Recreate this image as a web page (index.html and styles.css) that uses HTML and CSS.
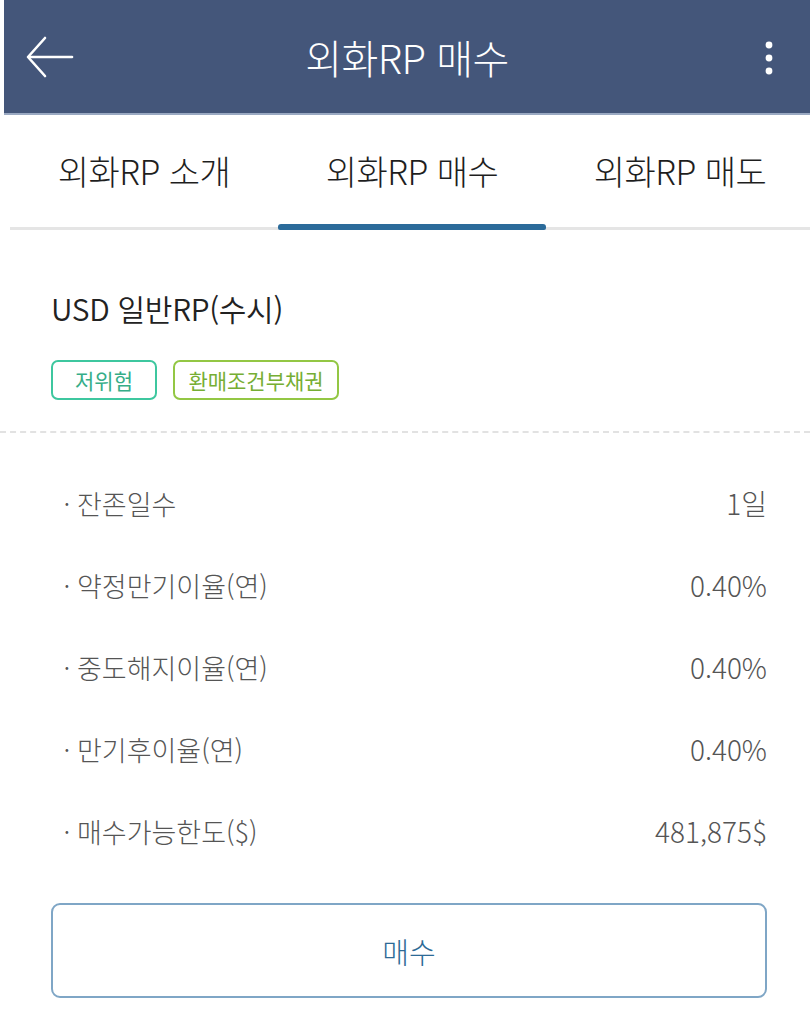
FILE: index.html
```html
<!DOCTYPE html>
<html lang="ko">
<head>
<meta charset="utf-8">
<title>외화RP 매수</title>
<link rel="stylesheet" href="styles.css">
</head>
<body>
<div class="app">
  <header class="topbar">
    <div class="topbar-left">
      <svg class="icon-back" width="48" height="44" viewBox="0 0 48 44" fill="none" stroke="#fff" stroke-width="2.6" stroke-linecap="round" stroke-linejoin="round">
        <path d="M46 21H3"/>
        <path d="M19 2L2 21L19 40"/>
      </svg>
    </div>
    <h1 class="topbar-title">외화RP 매수</h1>
    <div class="topbar-right">
      <svg class="icon-more" width="10" height="36" viewBox="0 0 10 36" fill="#fff">
        <circle cx="5" cy="5" r="3.4"/>
        <circle cx="5" cy="18" r="3.4"/>
        <circle cx="5" cy="31" r="3.4"/>
      </svg>
    </div>
  </header>

  <nav class="tabs">
    <div class="tab">외화RP 소개</div>
    <div class="tab active">외화RP 매수</div>
    <div class="tab">외화RP 매도</div>
  </nav>

  <section class="product">
    <h2 class="product-name">USD 일반RP(수시)</h2>
    <div class="badges">
      <span class="badge badge-risk">저위험</span>
      <span class="badge badge-type">환매조건부채권</span>
    </div>
  </section>

  <div class="divider"></div>

  <ul class="info">
    <li class="info-row"><span class="label"><span class="dot">·</span>잔존일수</span><span class="value">1일</span></li>
    <li class="info-row"><span class="label"><span class="dot">·</span>약정만기이율(연)</span><span class="value">0.40%</span></li>
    <li class="info-row"><span class="label"><span class="dot">·</span>중도해지이율(연)</span><span class="value">0.40%</span></li>
    <li class="info-row"><span class="label"><span class="dot">·</span>만기후이율(연)</span><span class="value">0.40%</span></li>
    <li class="info-row"><span class="label"><span class="dot">·</span>매수가능한도($)</span><span class="value">481,875$</span></li>
  </ul>

  <div class="actions">
    <button class="btn-buy" type="button">매수</button>
  </div>
</div>
</body>
</html>
```

FILE: styles.css
```css
html, body {
  margin: 0;
  padding: 0;
  background: #ffffff;
}
body {
  font-family: "Noto Sans CJK KR", "Noto Sans", sans-serif;
  color: #222;
  overflow: hidden;
}
.app {
  width: 810px;
  overflow: hidden;
}

/* top bar */
.topbar {
  margin-left: 4px;
  height: 113px;
  background: #44567a;
  border-bottom: 2px solid #9aa9c2;
  display: grid;
  grid-template-columns: 1fr auto 1fr;
  align-items: center;
}
.topbar-left {
  padding-left: 22px;
  display: flex;
  align-items: center;
  padding-top: 2px;
}
.topbar-title {
  margin: 0;
  font-size: 40px;
  font-weight: 300;
  color: #ffffff;
  letter-spacing: -0.5px;
}
.topbar-right {
  display: flex;
  justify-content: flex-end;
  padding-right: 36px;
  padding-top: 2px;
}
.icon-back, .icon-more { display: block; }

/* tabs */
.tabs {
  margin-left: 10px;
  width: 804px;
  display: grid;
  grid-template-columns: repeat(3, 1fr);
  border-bottom: 3px solid #e5e5e5;
}
.tab {
  position: relative;
  height: 112px;
  display: flex;
  align-items: center;
  justify-content: center;
  font-size: 34px;
  font-weight: 300;
  color: #1e1e1e;
  letter-spacing: -0.5px;
  padding-bottom: 2px;
  box-sizing: border-box;
}
.tab.active::after {
  content: "";
  position: absolute;
  left: 0;
  right: 0;
  bottom: -3px;
  height: 6px;
  border-radius: 3px 3px 2px 2px;
  background: #2b6b9a;
}

/* product */
.product {
  padding: 56px 0 0 51px;
}
.product-name {
  margin: 0;
  font-size: 30px;
  font-weight: 350;
  line-height: 44px;
  color: #222;
  letter-spacing: -0.3px;
}
.badges {
  margin-top: 30px;
  display: flex;
  gap: 16px;
}
.badge {
  height: 40px;
  box-sizing: border-box;
  border-radius: 7px;
  border: 2px solid;
  display: flex;
  align-items: center;
  justify-content: center;
  font-size: 21px;
}
.badge-risk {
  width: 106px;
  border-color: #3ec79f;
  color: #35ad88;
}
.badge-type {
  width: 166px;
  border-color: #93c744;
  color: #76ae34;
}

.divider {
  margin-top: 31px;
  height: 0;
  border-top: 2px dashed #e2e2e2;
}

/* info list */
.info {
  list-style: none;
  margin: 29px 43px 0 57px;
  padding: 0;
}
.info-row {
  height: 82px;
  display: flex;
  align-items: center;
  justify-content: space-between;
  color: #555;
}
.label {
  font-size: 27px;
  font-weight: 300;
  display: flex;
  align-items: center;
}
.dot {
  width: 20px;
  text-align: center;
}
.value {
  font-size: 28px;
  font-weight: 300;
}

/* actions */
.actions {
  margin: 31px 43px 0 51px;
}
.btn-buy {
  display: block;
  width: 100%;
  height: 95px;
  background: #ffffff;
  border: 2px solid #7fa6c6;
  border-radius: 9px;
  font-family: "Noto Sans CJK KR", "Noto Sans", sans-serif;
  font-size: 29px;
  font-weight: 300;
  color: #2d6a96;
  padding: 0;
}
```
